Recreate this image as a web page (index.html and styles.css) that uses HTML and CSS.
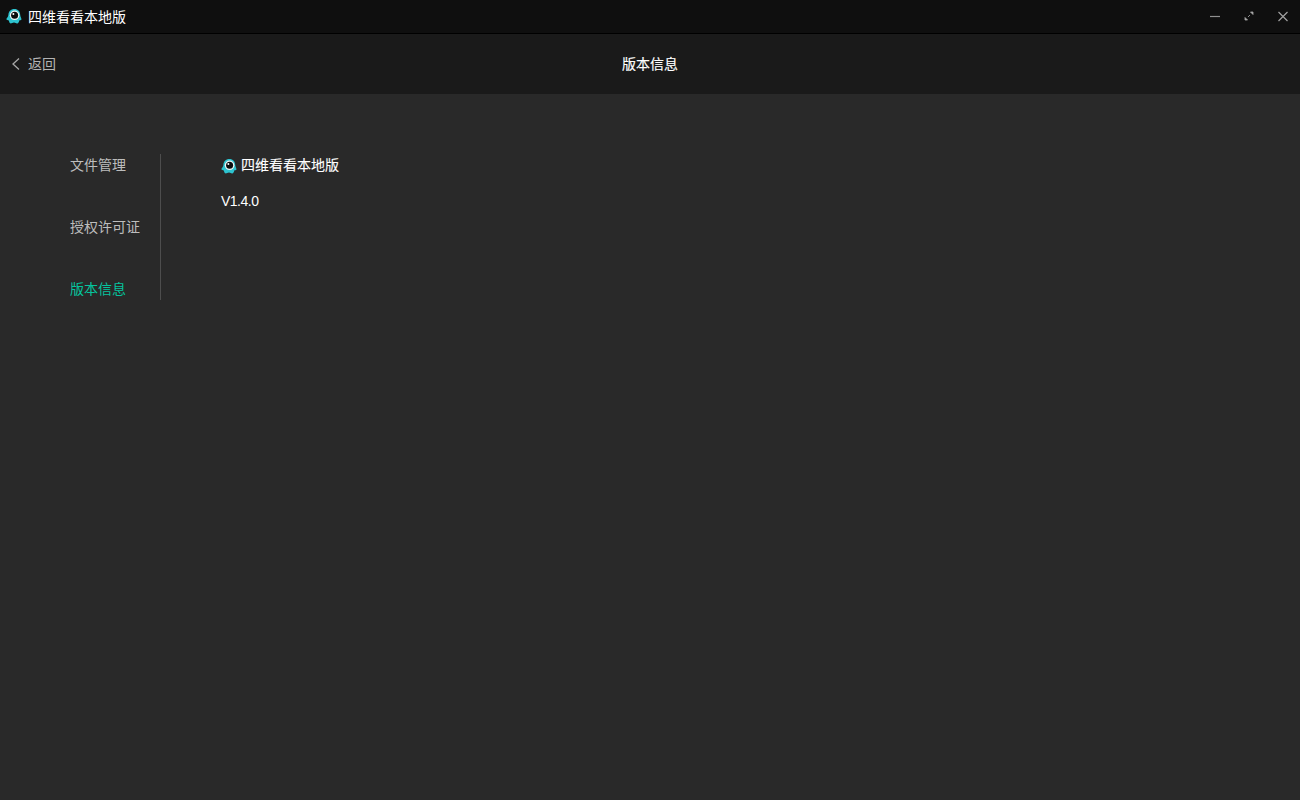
FILE: index.html
```html
<!DOCTYPE html>
<html lang="zh-CN">
<head>
<meta charset="utf-8">
<title>四维看看本地版</title>
<link rel="stylesheet" href="styles.css">
</head>
<body>
<svg class="defs" width="0" height="0" aria-hidden="true">
  <symbol id="logo" viewBox="0 0 16 16">
    <g transform="translate(0 .7)">
      <path d="M8.4 .4C12 .4 14.2 3 14.2 6.4C14.2 8.2 15.8 9.8 15.4 11C14.8 11.8 14 11.2 13.4 11.6C13 13.2 12.2 15 11 14.8C10 14.6 9.4 13.8 8 13.8C6.4 13.8 5.4 15 4.2 14.6C3.2 14.2 3.2 12.8 2.8 11.8C2 11.2 .6 11.6 .4 10.6C.4 9.4 2.4 8.4 2.4 6.4C2.4 3 4.8 .4 8.4 .4Z" fill="#2dc3cf"/>
      <circle cx="8.6" cy="6.6" r="4.8" fill="#eef6f6"/>
      <circle cx="8.6" cy="6.6" r="3.5" fill="#0a0d0e"/>
      <circle cx="7.4" cy="5.2" r="1" fill="#fff"/>
    </g>
  </symbol>
</svg>
<header class="titlebar">
  <div class="app-name">
    <svg class="logo"><use href="#logo"/></svg>
    <span>四维看看本地版</span>
  </div>
  <div class="win-controls">
    <svg class="win-icon" viewBox="0 0 12 12"><path d="M1 6.5H11" stroke="#8f8f8f" stroke-width="1.2" fill="none"/></svg>
    <svg class="win-icon" viewBox="0 0 12 12"><path d="M7 5L5 7" stroke="#8a8a8a" stroke-width="1" fill="none"/><path d="M7.5 2H10V4.5Z M2 7.5V10H4.5Z" fill="#a8a8a8" stroke="#a8a8a8" stroke-width=".8"/></svg>
    <svg class="win-icon" viewBox="0 0 12 12"><path d="M1.5 2L10.5 11M10.5 2L1.5 11" stroke="#a0a0a0" stroke-width="1.2" fill="none"/></svg>
  </div>
</header>
<div class="topbar">
  <div class="back">
    <svg class="back-icon" viewBox="0 0 10 14"><path d="M8 1.5L2 7L8 12.5" stroke="#a8a8a8" stroke-width="1.3" fill="none"/></svg>
    <span>返回</span>
  </div>
  <div class="page-title">版本信息</div>
</div>
<main class="content">
  <nav class="sidenav">
    <a class="nav-item">文件管理</a>
    <a class="nav-item">授权许可证</a>
    <a class="nav-item active">版本信息</a>
  </nav>
  <section class="info">
    <div class="product">
      <svg class="logo"><use href="#logo"/></svg>
      <span>四维看看本地版</span>
    </div>
    <div class="version">V1.4.0</div>
  </section>
</main>
</body>
</html>
```
FILE: styles.css
```css
* { box-sizing: border-box; }
html, body { height: 100%; }
body {
  margin: 0;
  height: 800px;
  overflow: hidden;
  display: flex;
  flex-direction: column;
  background: #292929;
  color: #fff;
  font-family: "Liberation Sans", "Noto Sans CJK SC", sans-serif;
  font-size: 14px;
}
.defs { display: block; height: 0; }
.titlebar {
  flex: none;
  height: 34px;
  display: flex;
  align-items: center;
  justify-content: space-between;
  padding: 0 11px 1px 6px;
  background: #0f0f0f;
  border-bottom: 1px solid #000;
}
.app-name { display: flex; align-items: center; gap: 6px; }
.logo { width: 16px; height: 16px; flex: none; }
.win-controls { display: flex; gap: 22px; }
.win-icon { width: 12px; height: 12px; display: block; }
.topbar {
  flex: none;
  height: 60px;
  display: flex;
  align-items: center;
  justify-content: center;
  position: relative;
  padding-bottom: 2px;
  background: #1a1a1a;
}
.back {
  position: absolute;
  left: 11px;
  top: 0;
  height: 58px;
  display: flex;
  align-items: center;
  gap: 7px;
  color: #b4b4b4;
}
.back-icon { width: 10px; height: 14px; margin-top: 2px; }
.page-title { -webkit-text-stroke: .15px #fff; }
.content { flex: 1; display: flex; padding: 60px 0 0 70px; align-items: flex-start; }
.sidenav {
  width: 91px;
  height: 146px;
  display: flex;
  flex-direction: column;
  justify-content: space-between;
  border-right: 1px solid #4d4d4d;
  color: #bdbdbd;
  line-height: 22px;
}
.nav-item { display: block; }
.nav-item.active { color: #05c49e; }
.info { padding-left: 60px; line-height: 22px; }
.product { display: flex; align-items: center; gap: 4px; -webkit-text-stroke: .1px #fff; }
.product .logo { margin-top: 2px; }
.version { margin-top: 14px; letter-spacing: -.5px; }
```
